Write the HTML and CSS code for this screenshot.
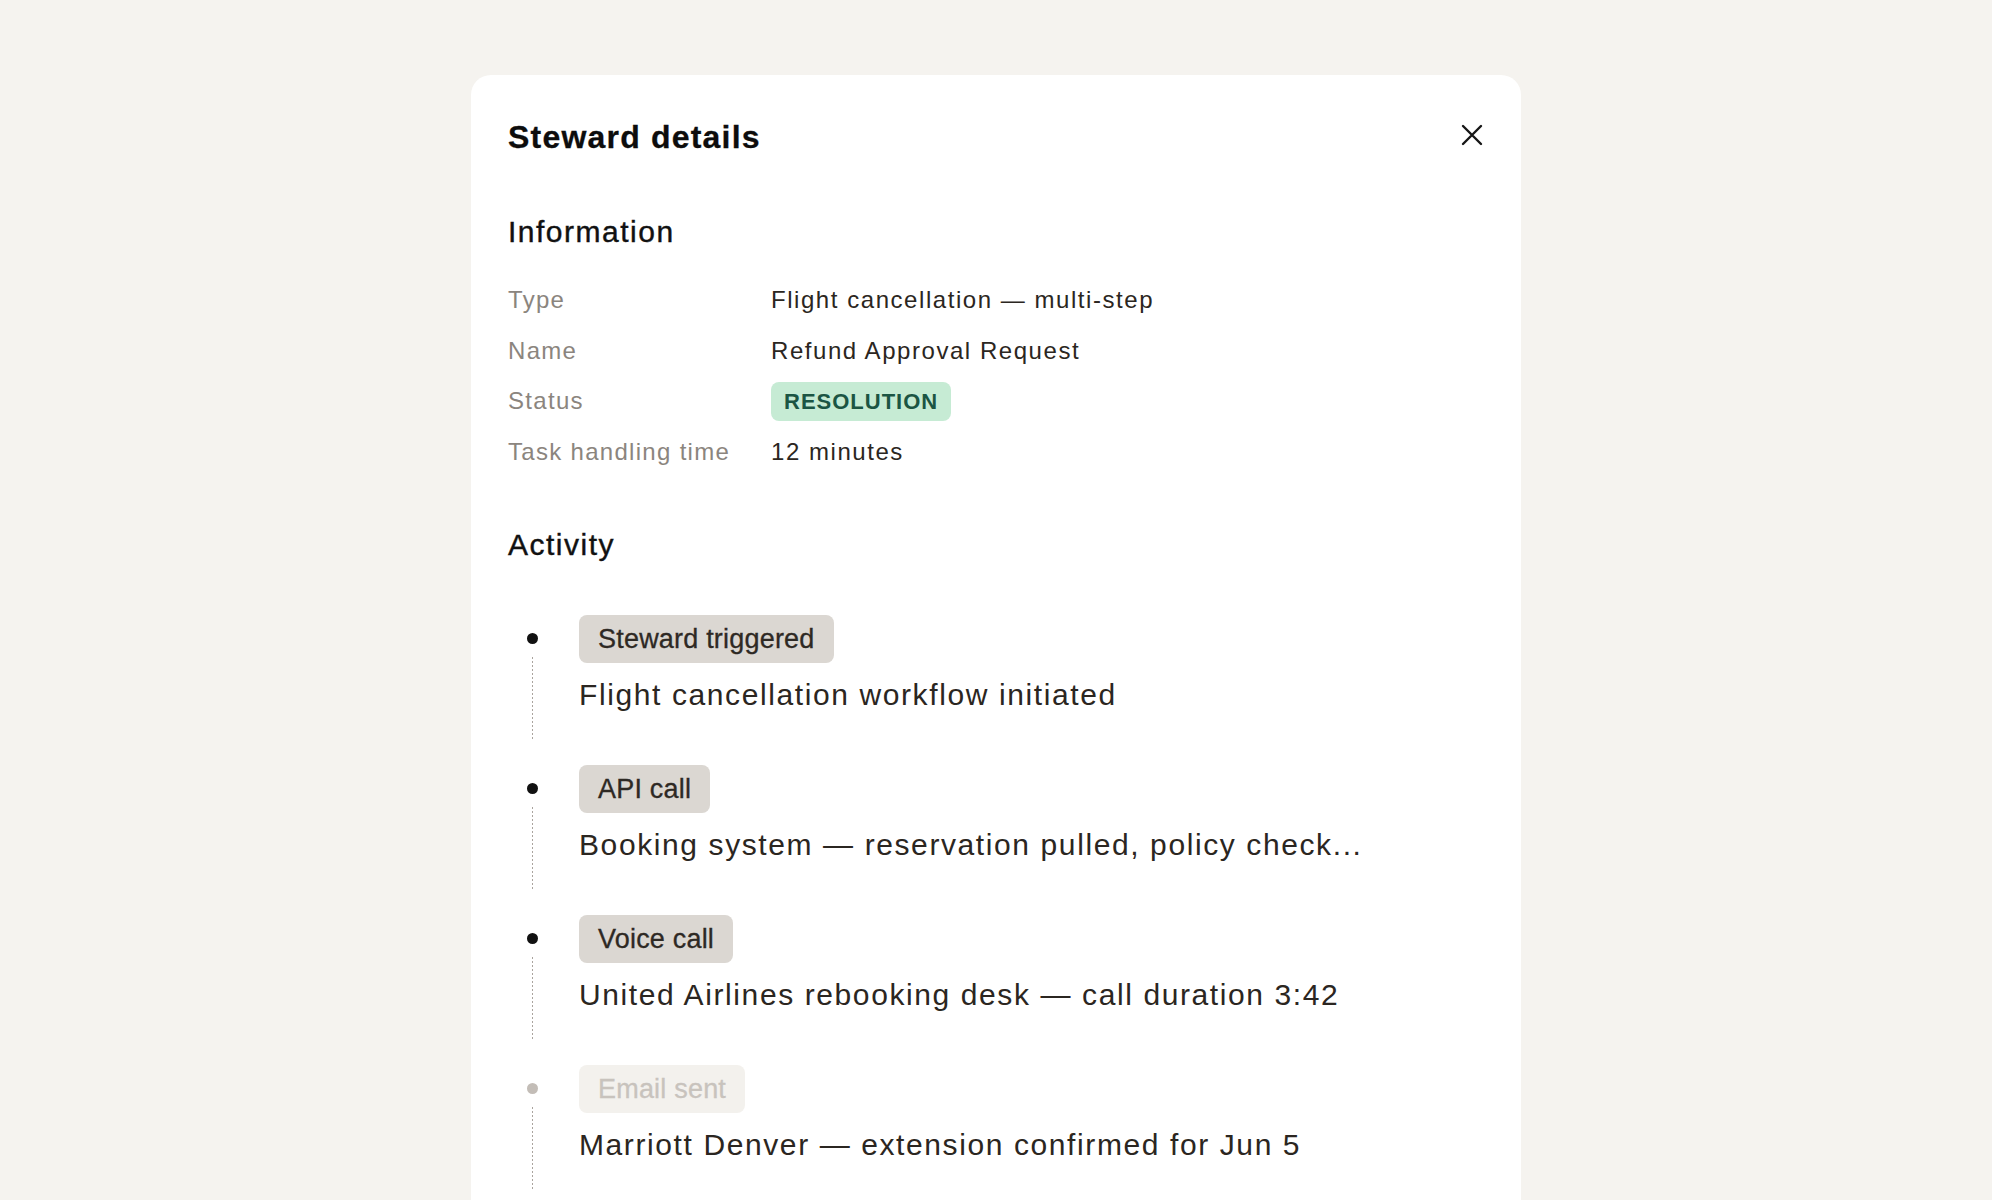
FILE: index.html
```html
<!DOCTYPE html>
<html lang="en">
<head>
    <meta charset="utf-8">
    <title>Steward details</title>
    <link rel="stylesheet" href="styles.css">
</head>
<body>
    <div class="card">
        <div class="card-head">
            <h1 class="title">Steward details</h1>
            <button class="close-btn" type="button" aria-label="Close">
                <svg width="24" height="24" viewBox="0 0 24 24">
                    <path d="M3 3 L21 21 M21 3 L3 21" stroke="#161616" stroke-width="2.4" stroke-linecap="round" fill="none"/>
                </svg>
            </button>
        </div>

        <h2 class="section-title">Information</h2>
        <div class="info-grid">
            <div class="info-label">Type</div>
            <div class="info-value">Flight cancellation — multi-step</div>
            <div class="info-label">Name</div>
            <div class="info-value">Refund Approval Request</div>
            <div class="info-label">Status</div>
            <div class="info-value"><span class="status-pill">RESOLUTION</span></div>
            <div class="info-label">Task handling time</div>
            <div class="info-value">12 minutes</div>
        </div>

        <h2 class="section-title activity-title">Activity</h2>
        <ul class="timeline">
            <li class="event">
                <div class="event-rail"><span class="dot"></span><span class="rail-line"></span></div>
                <div class="event-body">
                    <span class="event-tag">Steward triggered</span>
                    <p class="event-text">Flight cancellation workflow initiated</p>
                </div>
            </li>
            <li class="event">
                <div class="event-rail"><span class="dot"></span><span class="rail-line"></span></div>
                <div class="event-body">
                    <span class="event-tag">API call</span>
                    <p class="event-text">Booking system — reservation pulled, policy check...</p>
                </div>
            </li>
            <li class="event">
                <div class="event-rail"><span class="dot"></span><span class="rail-line"></span></div>
                <div class="event-body">
                    <span class="event-tag">Voice call</span>
                    <p class="event-text">United Airlines rebooking desk — call duration 3:42</p>
                </div>
            </li>
            <li class="event pending">
                <div class="event-rail"><span class="dot"></span><span class="rail-line"></span></div>
                <div class="event-body">
                    <span class="event-tag">Email sent</span>
                    <p class="event-text">Marriott Denver — extension confirmed for Jun 5</p>
                </div>
            </li>
        </ul>
    </div>
</body>
</html>
```

FILE: styles.css
```css
body {
    font-family: "Liberation Sans", Arial, sans-serif;
    background-color: #f5f3ef;
    color: #2b2621;
    margin: 0;
    padding: 0;
}

.card {
    width: 1050px;
    margin: 75px auto 0;
    padding: 42px 37px 80px;
    box-sizing: border-box;
    background: white;
    border-radius: 20px;
}

.card-head {
    display: flex;
    justify-content: space-between;
    align-items: center;
    height: 40px;
}

.title {
    margin: 0;
    font-size: 32px;
    line-height: 40px;
    font-weight: 700;
    letter-spacing: 1.2px;
    color: #0d0d0d;
    -webkit-text-stroke: 0.3px #0d0d0d;
}

.close-btn {
    width: 24px;
    height: 24px;
    padding: 0;
    margin: 0 0 4px;
    border: none;
    background: none;
    cursor: pointer;
}

.close-btn svg {
    display: block;
}

.section-title {
    margin: 57px 0 0;
    font-size: 30px;
    line-height: 36px;
    font-weight: 400;
    letter-spacing: 1.5px;
    color: #111;
    -webkit-text-stroke: 0.4px #111;
}

.activity-title {
    margin-top: 55px;
}

/* info table */
.info-grid {
    margin-top: 30px;
    display: grid;
    grid-template-columns: 263px 1fr;
    grid-auto-rows: 40px;
    row-gap: 10.6px;
    align-items: center;
    font-size: 24px;
}

.info-label {
    color: #8b857e;
    letter-spacing: 1.3px;
}

.info-value {
    color: #2b2621;
    letter-spacing: 1.55px;
}

.status-pill {
    display: inline-block;
    padding: 0 13px;
    line-height: 39px;
    border-radius: 8px;
    background: #c6ebd4;
    color: #1b5543;
    font-size: 22px;
    font-weight: 700;
    letter-spacing: 1px;
}

/* activity timeline */
.timeline {
    list-style: none;
    margin: 52px 0 0;
    padding: 0;
    display: flex;
    flex-direction: column;
    gap: 25px;
}

.event {
    display: grid;
    grid-template-columns: 48px 1fr;
    column-gap: 23px;
}

.event-rail {
    display: flex;
    flex-direction: column;
    align-items: center;
}

.dot {
    width: 11px;
    height: 11px;
    margin-top: 18.5px;
    border-radius: 50%;
    background: #111;
}

.rail-line {
    width: 1px;
    height: 83px;
    margin-top: 12.5px;
    background: repeating-linear-gradient(to bottom, #aaa49e 0 2px, transparent 2px 4px);
}

.event-body {
    display: flex;
    flex-direction: column;
    align-items: flex-start;
}

.event-tag {
    display: inline-block;
    padding: 0 19px;
    line-height: 48px;
    border-radius: 8px;
    background: #dbd7d2;
    color: #2e2924;
    font-size: 27px;
    letter-spacing: 0.2px;
    -webkit-text-stroke: 0.3px #2e2924;
}

.event-text {
    margin: 12px 0 0;
    font-size: 30px;
    line-height: 40px;
    letter-spacing: 1.6px;
    color: #2b2621;
}

.pending .dot {
    background: #c3bdb7;
}

.pending .event-tag {
    background: #f3f1ed;
    color: #c8c3bd;
    -webkit-text-stroke: 0.3px #c8c3bd;
}
```
